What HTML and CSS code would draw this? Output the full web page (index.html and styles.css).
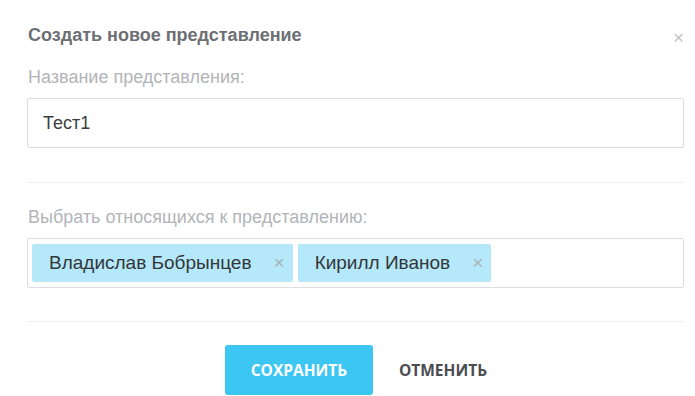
FILE: index.html
```html
<!DOCTYPE html>
<html lang="ru">
<head>
<meta charset="utf-8">
<link rel="stylesheet" href="styles.css">
</head>
<body>
<div class="modal">
  <div class="header">
    <h1 class="title">Создать новое представление</h1>
    <span class="close">&times;</span>
  </div>
  <label class="label">Название представления:</label>
  <div class="input">Тест1</div>
  <hr class="divider">
  <label class="label label-2">Выбрать относящихся к представлению:</label>
  <div class="multi">
    <span class="tag">Владислав Бобрынцев<span class="tag-x">&times;</span></span>
    <span class="tag">Кирилл Иванов<span class="tag-x">&times;</span></span>
  </div>
  <hr class="divider divider-2">
  <div class="actions">
    <button class="btn btn-primary">СОХРАНИТЬ</button>
    <button class="btn btn-link">ОТМЕНИТЬ</button>
  </div>
</div>
</body>
</html>
```
FILE: styles.css
```css
html, body {
  margin: 0;
  padding: 0;
  background: #fff;
}
body {
  font-family: "Liberation Sans", Arial, sans-serif;
  width: 695px;
  height: 396px;
  overflow: hidden;
}
.modal {
  padding: 24px 11px 0 27px;
  display: flex;
  flex-direction: column;
}
.header {
  display: flex;
  justify-content: space-between;
  align-items: center;
  height: 22px;
}
.title {
  margin: 0 0 0 1px;
  font-size: 18px;
  font-weight: bold;
  color: #6c6f74;
}
.close {
  color: #bfc1c4;
  font-size: 19px;
  margin-right: 0;
  margin-top: 6px;
}
.label {
  margin-top: 21px;
  margin-left: 1px;
  font-size: 18px;
  color: #b2b5b8;
  line-height: 20px;
}
.input {
  margin-top: 11px;
  height: 48px;
  border: 1px solid #dcdde0;
  border-radius: 2px;
  display: flex;
  align-items: center;
  padding-left: 15px;
  font-size: 18px;
  color: #3a3d41;
}
.divider {
  margin: 34px 0 0;
  border: 0;
  border-top: 1px solid #eeeff1;
  height: 0;
}
.label-2 {
  margin-top: 24px;
}
.multi {
  margin-top: 11px;
  height: 48px;
  border: 1px solid #dcdde0;
  border-radius: 2px;
  display: flex;
  align-items: center;
  padding-left: 4px;
  gap: 5px;
}
.tag {
  background: #b5e8f8;
  border-radius: 2px;
  height: 38px;
  display: flex;
  align-items: center;
  padding-left: 17px;
  font-size: 19px;
  color: #33373b;
}
.tag-x {
  color: #a6b3b9;
  font-size: 19px;
  margin-left: 22px;
  margin-right: 8px;
}
.divider-2 {
  margin-top: 33px;
}
.actions {
  margin-top: 23px;
  display: flex;
  justify-content: center;
  gap: 26px;
  padding-left: 1px;
}
.btn {
  font-family: "Open Sans", sans-serif;
  font-weight: bold;
  font-size: 15.5px;
  border: 0;
  height: 50px;
  cursor: pointer;
}
.btn-primary {
  background: #3cc6f2;
  color: #fff;
  width: 148px;
  border-radius: 3px;
}
.btn-link {
  background: transparent;
  color: #4a4d52;
  padding: 0;
}
```
